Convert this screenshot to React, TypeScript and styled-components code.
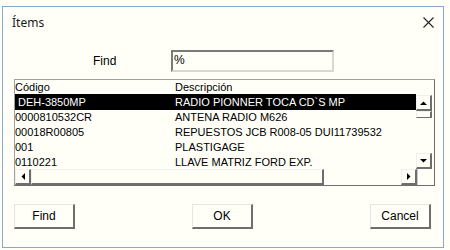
import { createGlobalStyle } from 'styled-components';
import styled from 'styled-components';

const GlobalStyle = createGlobalStyle`
    body {
        margin: 0;
        background: #fffff8;
        font-family: "Liberation Sans", Arial, sans-serif;
    }
`;

const Dialog = styled.div`
    margin: 6px 0 0 2px;
    width: 440px;
    height: 240px;
    border: 1px solid #83a9cc;
    background: #fffff8;
    display: flex;
    flex-direction: column;
`;

const TitleBar = styled.div`
    height: 30px;
    display: flex;
    align-items: center;
    justify-content: space-between;
    padding: 0 9px 0 9px;
`;

const Title = styled.span`
    font-family: "Noto Sans", sans-serif;
    font-size: 12px;
    color: #1b1b1b;
    margin-top: 1px;
`;

const FindRow = styled.div`
    display: flex;
    align-items: center;
    margin-top: 13px;
    padding-left: 90px;
    height: 22px;
`;

const Label = styled.span`
    width: 78px;
    font-size: 12px;
    color: #000;
`;

const Input = styled.div`
    width: 158px;
    height: 18px;
    border: 2px solid;
    border-color: #7a7a7a #d8d8d0 #d8d8d0 #7a7a7a;
    font-size: 12px;
    line-height: 16px;
    padding-left: 1px;
    color: #000;
`;

const ListBox = styled.div`
    margin: 7px 0 0 11px;
    width: 419px;
    height: 105px;
    border: 1px solid;
    border-color: #a0a0a0 #6e6e6e #6e6e6e #a0a0a0;
    display: flex;
    flex-direction: column;
    font-size: 11px;
    color: #000;
    overflow: hidden;
`;

const HeaderRow = styled.div`
    display: grid;
    grid-template-columns: 160px 1fr;
    height: 14px;
    line-height: 14px;
    border-bottom: 1px solid #000;
    margin-right: 18px;
`;

const Middle = styled.div`
    flex: 1;
    display: flex;
    min-height: 0;
`;

const Rows = styled.div`
    flex: 1;
    overflow: hidden;
`;

const Row = styled.div<{ $selected?: boolean }>`
    display: grid;
    grid-template-columns: 160px 1fr;
    height: 15px;
    line-height: 15px;
    white-space: nowrap;
    background: ${(p) => (p.$selected ? '#000' : 'transparent')};
    color: ${(p) => (p.$selected ? '#fff' : '#000')};
    padding-left: ${(p) => (p.$selected ? '3px' : '0')};
    & > span:last-child {
        margin-left: ${(p) => (p.$selected ? '-3px' : '0')};
    }
`;

const VScroll = styled.div`
    width: 17px;
    display: flex;
    flex-direction: column;
    margin-right: 1px;
`;

const ScrollButton = styled.div`
    width: 16px;
    height: 16px;
    box-sizing: border-box;
    border: 1px solid;
    border-color: #f0f0f0 #6e6e6e #6e6e6e #f0f0f0;
    border-right-width: 2px;
    border-bottom-width: 2px;
    background: #fffff8;
    display: flex;
    align-items: center;
    justify-content: center;
    flex-shrink: 0;
`;

const VThumb = styled.div`
    width: 16px;
    height: 7px;
    box-sizing: border-box;
    border: 1px solid;
    border-color: #f0f0f0 #6e6e6e #6e6e6e #f0f0f0;
    border-right-width: 2px;
`;

const Track = styled.div`
    flex: 1;
`;

const HScroll = styled.div`
    height: 16px;
    display: flex;
    flex-shrink: 0;
`;

const HThumb = styled.div`
    width: 293px;
    height: 16px;
    box-sizing: border-box;
    border: 1px solid;
    border-color: #f0f0f0 #6e6e6e #6e6e6e #f0f0f0;
    border-right-width: 2px;
    border-bottom-width: 2px;
`;

const Corner = styled.div`
    width: 17px;
    height: 16px;
    box-sizing: border-box;
    border-left: 1px solid #c8c8c8;
`;

const ButtonRow = styled.div`
    display: flex;
    justify-content: space-between;
    align-items: center;
    margin-top: 18px;
    padding: 0 12px 0 11px;
`;

const Button = styled.button`
    width: 61px;
    height: 25px;
    box-sizing: border-box;
    background: #fffff8;
    border: 1px solid;
    border-color: #e6e6e0 #6e6e6e #6e6e6e #e6e6e0;
    border-right-width: 2px;
    border-bottom-width: 2px;
    font-family: "Liberation Sans", Arial, sans-serif;
    font-size: 12px;
    color: #000;
    padding: 0;
`;

type Dir = 'up' | 'down' | 'left' | 'right';

const Arrow = ({ dir }: { dir: Dir }) => {
    const pts: Record<Dir, string> = {
        up: '0,4 7,4 3.5,0.5',
        down: '0,0 7,0 3.5,3.5',
        left: '4,0 4,7 0.5,3.5',
        right: '0,0 0,7 3.5,3.5',
    };
    const vertical = dir === 'up' || dir === 'down';
    return (
        <svg width={vertical ? 7 : 4} height={vertical ? 4 : 7}>
            <polygon points={pts[dir]} fill="#000" />
        </svg>
    );
};

const items = [
    ['DEH-3850MP', 'RADIO PIONNER TOCA CD`S MP'],
    ['0000810532CR', 'ANTENA RADIO M626'],
    ['00018R00805', 'REPUESTOS JCB R008-05 DUI11739532'],
    ['001', 'PLASTIGAGE'],
    ['0110221', 'LLAVE MATRIZ FORD EXP.'],
];

const App = () => {
    return (
        <>
            <GlobalStyle />
            <Dialog>
                <TitleBar>
                    <Title>Ítems</Title>
                    <svg width="11" height="11" viewBox="0 0 11 11">
                        <path d="M0.5 0.5 L10.5 10.5 M10.5 0.5 L0.5 10.5" stroke="#222" strokeWidth="1.1" />
                    </svg>
                </TitleBar>
                <FindRow>
                    <Label>Find</Label>
                    <Input>%</Input>
                </FindRow>
                <ListBox>
                    <HeaderRow>
                        <span>Código</span>
                        <span>Descripción</span>
                    </HeaderRow>
                    <Middle>
                        <Rows>
                            {items.map(([code, desc], i) => (
                                <Row key={code} $selected={i === 0}>
                                    <span>{code}</span>
                                    <span>{desc}</span>
                                </Row>
                            ))}
                        </Rows>
                        <VScroll>
                            <ScrollButton>
                                <Arrow dir="up" />
                            </ScrollButton>
                            <VThumb />
                            <Track />
                            <ScrollButton>
                                <Arrow dir="down" />
                            </ScrollButton>
                        </VScroll>
                    </Middle>
                    <HScroll>
                        <ScrollButton>
                            <Arrow dir="left" />
                        </ScrollButton>
                        <HThumb />
                        <Track />
                        <ScrollButton>
                            <Arrow dir="right" />
                        </ScrollButton>
                        <Corner />
                    </HScroll>
                </ListBox>
                <ButtonRow>
                    <Button>Find</Button>
                    <Button>OK</Button>
                    <Button>Cancel</Button>
                </ButtonRow>
            </Dialog>
        </>
    );
};

export default App;
